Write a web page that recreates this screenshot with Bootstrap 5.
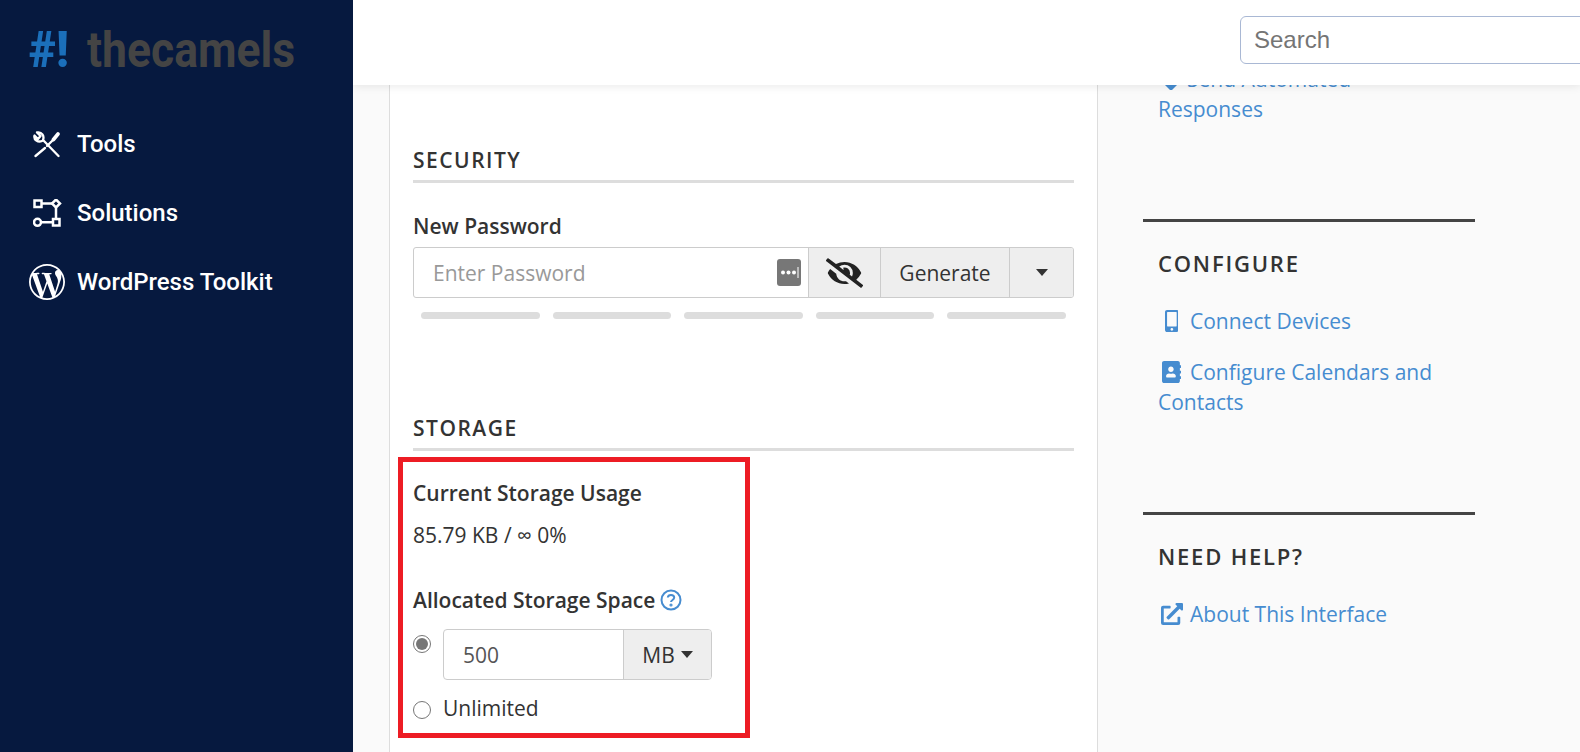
<!DOCTYPE html>
<html lang="en"><head><meta charset="utf-8"><title>Email account</title>
<link href="https://cdn.jsdelivr.net/npm/bootstrap@5.3.0/dist/css/bootstrap.min.css" rel="stylesheet">
<style>
html,body{height:752px;overflow:hidden}
body{font-family:"Open Sans",sans-serif;font-size:21px;line-height:30px;color:#333;background:#fafafa}
.side-bar{width:353px;height:752px;background:#06193f;flex:none;padding:31px 0 0 29px}
.brand-line{height:38px;line-height:38px;font-family:Roboto,sans-serif;font-weight:700;font-size:50px;white-space:nowrap;display:flex}
.brand-mark{color:#1b6fba;font-weight:900;display:inline-block;width:42px;transform:scaleX(.93);transform-origin:left center}
.brand-name{color:#444;display:inline-block;margin-left:16px;transform:scaleX(.89);transform-origin:left center}
.side-menu{margin-top:57px;list-style:none;padding:0}
.side-item{height:36px;margin-bottom:33px;display:flex;align-items:center;color:#fff;font-family:Roboto,sans-serif;font-weight:500;font-size:24px}
.side-ico{width:48px;flex:none;display:flex;justify-content:flex-start}
.ico-inset{margin-left:4px}
.right-part{flex:1;min-width:0;height:752px;overflow:hidden}
.top-head{height:85px;background:#fff;position:relative;z-index:5;box-shadow:0 2px 8px rgba(0,0,0,.08);padding:16px 0 0 887px;overflow:hidden}
.search-box{width:500px;height:48px;border:1px solid #a9b8d4;border-radius:6px;padding:0 13px;font-family:"Liberation Sans",sans-serif;font-size:24px;outline:0;display:block}
.search-box::placeholder{color:#757575;opacity:1}
.page-body{margin-top:-21px;padding-left:36px}
.main-panel{width:709px;height:700px;background:#fff;border-left:1px solid #ddd;border-right:1px solid #ddd;padding:81px 23px 0 23px;flex:none}
.sec-title{font-size:21px;font-weight:600;letter-spacing:1.5px;line-height:30px;margin:0;padding-bottom:5px;border-bottom:3px solid #ddd}
.fld-label{font-weight:600;display:block;margin:0;line-height:30px}
.pw-group{height:51px;margin-top:6px;border:1px solid #ccc;border-radius:3px;overflow:hidden}
.pw-input{flex:1;min-width:0;padding:0 7px 0 19px;position:relative}
.ph-text{color:#999}
.grey-cell{background:#eee;border-left:1px solid #ccc;display:flex;align-items:center;justify-content:center;color:#333;flex:none}
.caret-down{width:0;height:0;border-left:6.5px solid transparent;border-right:6.5px solid transparent;border-top:7px solid #333}
.bars-row{margin:14px 8px 0;gap:13px}
.bar-piece{flex:1;height:7px;border-radius:4px;background:#ddd}
.red-frame{border:5px solid #ed1c24;width:352px;height:281px;margin:6px 0 0 -15px;padding:16px 0 0 10px;background:#fff}
.radio-dot{width:18px;height:18px;border-radius:50%;border:1.5px solid #767676;flex:none;display:flex;align-items:center;justify-content:center;background:#fff}
.radio-dot i{width:12px;height:12px;border-radius:50%;background:#767676;display:block}
.size-group{width:269px;height:51px;border:1px solid #ccc;border-radius:4px;overflow:hidden}
.size-val{flex:1;padding-left:19px;color:#555}
.side-col{width:332px;margin-left:45px;flex:none}
.side-link{color:#468cd0;text-decoration:none}
.side-top{height:155px;padding:0 15px}
.side-block{border-top:3px solid #444;padding:26px 15px 0;height:293px}
.side-title{font-size:22px;font-weight:600;letter-spacing:1.8px;line-height:30px;margin:0 0 28px}
.side-para{margin:0 0 21px}
.lnk-ico{fill:#468cd0;height:22px;vertical-align:-3px}
.lnk-slot{display:inline-block;width:27px;text-align:center;margin-right:5px}
</style></head><body>
<div class="d-flex">
<aside class="side-bar">
  <div class="brand-line"><span class="brand-mark">#!</span><span class="brand-name">thecamels</span></div>
  <ul class="side-menu">
    <li class="side-item"><span class="side-ico"><svg class="ico-inset" width="27" height="27" viewBox="0 0 27 27" fill="none" stroke="#fff" stroke-width="2.300" stroke-linecap="round" stroke-linejoin="round"><path d="M25.500 25 10 9C11.500 5 9 .5 4 1.500L7.500 5 5 8 1.500 4.500C.5 9 5 11.500 9 10M2.500 25 12 17"/><path d="M14 15 20 9"/><path d="M20.500 8.500 25 3" stroke-width="3.600"/></svg></span>Tools</li>
    <li class="side-item"><span class="side-ico"><svg class="ico-inset" width="29" height="29" viewBox="0 0 29 29" fill="none" stroke="#fff" stroke-width="2.500"><rect x="1.500" y="1.500" width="7" height="6.500"/><path d="M23 .5 27 4.500 23 8.500 19 4.500Z"/><circle cx="4.500" cy="23.300" r="3.500"/><rect x="20" y="20" width="6.500" height="6.500"/><path d="M8.500 4.500H19M8 23.300H20M23 8.500V20"/></svg></span>Solutions</li>
    <li class="side-item"><span class="side-ico"><svg width="36" height="36" viewBox="0 0 24 24" fill="#fff"><path d="M21.469 6.825c.84 1.537 1.318 3.3 1.318 5.175 0 3.979-2.156 7.456-5.363 9.325l3.295-9.527c.615-1.54.82-2.771.82-3.864 0-.405-.026-.78-.07-1.11m-7.981.105c.647-.03 1.232-.105 1.232-.105.582-.075.514-.93-.067-.899 0 0-1.755.135-2.88.135-1.064 0-2.85-.15-2.85-.15-.585-.03-.661.855-.075.885 0 0 .54.061 1.125.09l1.68 4.605-2.37 7.08L5.354 6.9c.649-.03 1.234-.1 1.234-.1.585-.075.516-.93-.065-.896 0 0-1.746.138-2.874.138-.2 0-.438-.008-.69-.015C4.911 3.15 8.235 1.215 12 1.215c2.809 0 5.365 1.072 7.286 2.833-.046-.003-.091-.009-.141-.009-1.06 0-1.812.923-1.812 1.914 0 .89.513 1.643 1.06 2.531.411.72.89 1.643.89 2.977 0 .915-.354 1.994-.821 3.479l-1.075 3.585-3.9-11.61.001.014zM12 22.784c-1.059 0-2.081-.153-3.048-.437l3.237-9.406 3.315 9.087c.024.053.05.101.078.149-1.12.393-2.325.609-3.582.609M1.211 12c0-1.564.336-3.05.935-4.39L7.29 21.709C3.694 19.96 1.212 16.271 1.211 12M12 0C5.385 0 0 5.385 0 12s5.385 12 12 12 12-5.385 12-12S18.615 0 12 0"/></svg></span>WordPress Toolkit</li>
  </ul>
</aside>
<div class="right-part">
  <header class="top-head"><input class="search-box" placeholder="Search" aria-label="Search"></header>
  <div class="page-body d-flex">
    <main class="main-panel">
      <h5 class="sec-title">SECURITY</h5>
      <label class="fld-label" style="margin-top:28px">New Password</label>
      <div class="pw-group d-flex">
        <div class="pw-input d-flex align-items-center justify-content-between"><span class="ph-text">Enter Password</span>
          <svg width="24" height="27" viewBox="0 0 24 27"><rect width="24" height="27" rx="3" fill="#777"/><circle cx="6" cy="13.500" r="2" fill="#fff"/><circle cx="11.500" cy="13.500" r="2" fill="#fff"/><circle cx="17" cy="13.500" r="2" fill="#fff"/><path d="M21 8v11" stroke="#fff"/></svg></div>
        <div class="grey-cell" style="width:72px"><svg width="37" height="30" viewBox="0 0 640 512" fill="#222"><path d="M320 400c-75.850 0-137.250-58.710-142.900-133.110L72.200 185.820c-13.790 17.300-26.480 35.590-36.720 55.590a32.350 32.350 0 0 0 0 29.190C89.710 376.410 197.070 448 320 448c26.910 0 52.870-4 77.890-10.460L346 397.390a144.130 144.130 0 0 1-26 2.610zm313.820 58.100l-110.550-85.440a331.250 331.250 0 0 0 81.250-102.070 32.350 32.350 0 0 0 0-29.190C550.290 135.590 442.930 64 320 64a308.150 308.150 0 0 0-147.320 37.700L45.460 3.370A16 16 0 0 0 23 6.180L3.370 31.450A16 16 0 0 0 6.180 53.900l588.360 454.730a16 16 0 0 0 22.460-2.810l19.640-25.270a16 16 0 0 0-2.820-22.450zm-183.720-142l-39.300-30.380A94.750 94.750 0 0 0 416 256a94.760 94.760 0 0 0-121.310-92.210A47.650 47.650 0 0 1 304 192a46.640 46.640 0 0 1-1.540 10l-73.610-56.890A142.310 142.310 0 0 1 320 112a143.920 143.920 0 0 1 144 144c0 21.630-5.290 41.790-13.900 60.110z"/></svg></div>
        <div class="grey-cell" style="width:129px">Generate</div>
        <div class="grey-cell" style="width:64px"><span class="caret-down"></span></div>
      </div>
      <div class="bars-row d-flex"><span class="bar-piece"></span><span class="bar-piece"></span><span class="bar-piece"></span><span class="bar-piece"></span><span class="bar-piece"></span></div>
      <h5 class="sec-title" style="margin-top:94px">STORAGE</h5>
      <section class="red-frame">
        <div class="fld-label">Current Storage Usage</div>
        <div style="margin-top:12px">85.79 KB / ∞ 0%</div>
        <div class="fld-label d-flex align-items-center" style="margin-top:35px;gap:5px">Allocated Storage Space <svg width="22" height="22" viewBox="0 0 22 22" fill="none" stroke="#468cd0" stroke-width="2"><circle cx="11" cy="11" r="9.500"/><path d="M7.800 8.500C8 6.800 9.300 6 11 6c1.800 0 3.200 1 3.200 2.600 0 2.400-3.200 2.300-3.200 4.400"/><circle cx="11" cy="16" r=".6" fill="#468cd0"/></svg></div>
        <div class="d-flex" style="gap:12px;margin-top:14px">
          <span class="radio-dot" style="margin-top:6px"><i></i></span>
          <div class="size-group d-flex"><div class="size-val d-flex align-items-center">500</div><div class="grey-cell" style="width:88px;gap:6px">MB <span class="caret-down"></span></div></div>
        </div>
        <div class="d-flex" style="gap:12px;margin-top:13px"><span class="radio-dot" style="margin-top:8px"></span>Unlimited</div>
      </section>
    </main>
    <aside class="side-col">
      <div class="side-top"><p class="m-0"><a class="side-link" href="#"><span class="lnk-slot" style="margin-right:4px;width:25px"><svg class="lnk-ico" viewBox="0 0 20 22"><path d="M0 0H20V12L10 22 0 12Z" transform="translate(0 1)"/></svg></span>Send Automated<br>Responses</a></p></div>
      <div class="side-block">
        <h5 class="side-title">CONFIGURE</h5>
        <p class="side-para"><a class="side-link" href="#"><span class="lnk-slot"><svg class="lnk-ico" viewBox="0 0 320 512"><path d="M272 0H48C21.500 0 0 21.500 0 48v416c0 26.500 21.500 48 48 48h224c26.500 0 48-21.500 48-48V48c0-26.500-21.500-48-48-48zM160 480c-17.700 0-32-14.300-32-32s14.300-32 32-32 32 14.300 32 32-14.300 32-32 32zm112-108c0 6.600-5.400 12-12 12H60c-6.600 0-12-5.400-12-12V60c0-6.600 5.400-12 12-12h200c6.600 0 12 5.400 12 12v312z"/></svg></span>Connect Devices</a></p>
        <p class="side-para"><a class="side-link" href="#"><span class="lnk-slot"><svg class="lnk-ico" viewBox="0 0 448 512"><path d="M436 160c6.600 0 12-5.400 12-12v-40c0-6.600-5.400-12-12-12h-20V48c0-26.500-21.500-48-48-48H48C21.500 0 0 21.500 0 48v416c0 26.500 21.500 48 48 48h320c26.500 0 48-21.500 48-48v-48h20c6.600 0 12-5.400 12-12v-40c0-6.600-5.400-12-12-12h-20v-64h20c6.600 0 12-5.400 12-12v-40c0-6.600-5.400-12-12-12h-20v-64h20zm-228-32c35.300 0 64 28.700 64 64s-28.700 64-64 64-64-28.700-64-64 28.700-64 64-64zm112 236.800c0 10.600-10 19.200-22.400 19.200H118.400C106 384 96 375.400 96 364.800v-19.200c0-31.800 30.100-57.600 67.200-57.600h5c12.300 5.100 25.700 8 39.800 8s27.600-2.900 39.800-8h5c37.100 0 67.200 25.800 67.200 57.600v19.200z"/></svg></span>Configure Calendars and Contacts</a></p>
      </div>
      <div class="side-block">
        <h5 class="side-title">NEED HELP?</h5>
        <p class="side-para"><a class="side-link" href="#"><span class="lnk-slot"><svg class="lnk-ico" viewBox="0 0 512 512"><path d="M432,320H400a16,16,0,0,0-16,16V448H64V128H208a16,16,0,0,0,16-16V80a16,16,0,0,0-16-16H48A48,48,0,0,0,0,112V464a48,48,0,0,0,48,48H400a48,48,0,0,0,48-48V336A16,16,0,0,0,432,320ZM488,0h-128c-21.370,0-32.050,25.910-17,41l35.730,35.730L135,320.370a24,24,0,0,0,0,34L157.670,377a24,24,0,0,0,34,0L435.280,133.320,471,169c15,15,41,4.500,41-17V24A24,24,0,0,0,488,0Z"/></svg></span>About This Interface</a></p>
      </div>
    </aside>
  </div>
</div>
</div>
<script src="https://cdn.jsdelivr.net/npm/bootstrap@5.3.0/dist/js/bootstrap.bundle.min.js"></script>
</body></html>
